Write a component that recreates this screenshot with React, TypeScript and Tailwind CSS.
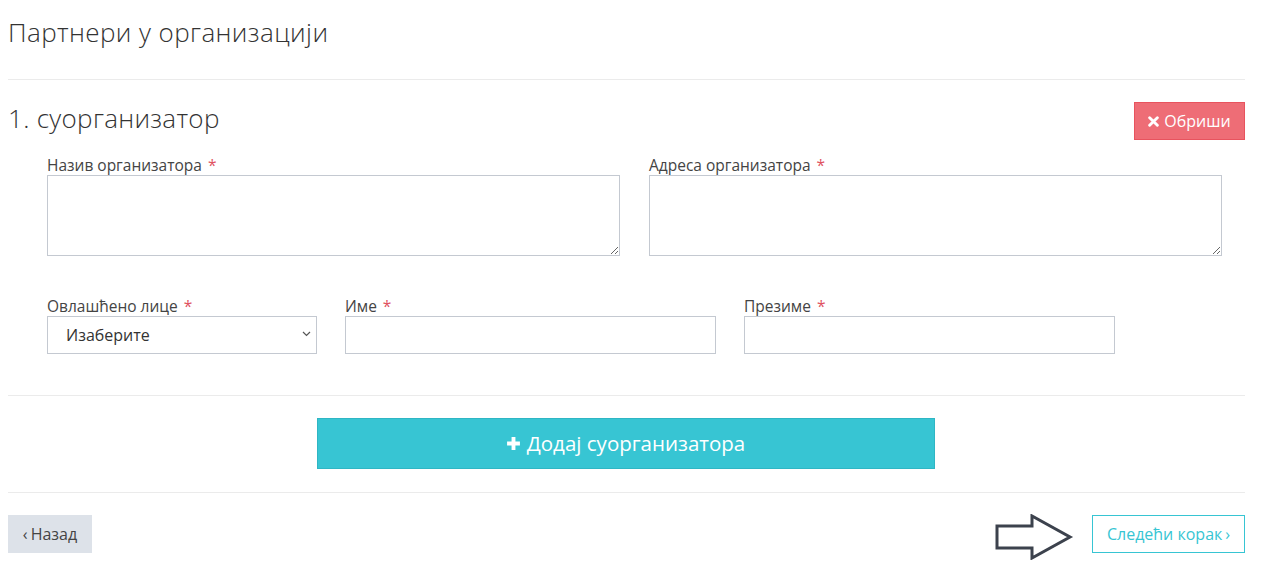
import React from 'react';

function Req() {
  return <span className="text-[#e0525f] ml-[6px]">*</span>;
}

export default function App() {
  const font = { fontFamily: '"Open Sans", "Liberation Sans", sans-serif' };
  return (
    <div className="bg-white w-[1275px] h-[571px] overflow-hidden text-[#3b3b3b]" style={font}>
      <div className="ml-[8px] w-[1237px]">
        <h1 className="pt-[13px] h-[79px] text-[26px] font-light text-[#333] tracking-[0.4px]">
          Партнери у организацији
        </h1>
        <div className="border-t border-[#ebebeb]" />

        <div className="flex items-start justify-between pt-[22px]">
          <h2 className="text-[26px] font-light text-[#333] leading-[32px] tracking-[0.3px]">1. суорганизатор</h2>
          <button className="flex items-center gap-[5px] h-[38px] w-[111px] justify-center bg-[#ee6d76] border border-[#e8535e] text-white text-[16px]">
            <svg width="11" height="11" viewBox="0 0 10 10">
              <path d="M1.5 1.5L8.5 8.5M8.5 1.5L1.5 8.5" stroke="white" strokeWidth="2.6" strokeLinecap="round" />
            </svg>
            Обриши
          </button>
        </div>

        <div className="ml-[39px] mt-[15px] flex gap-[29px]">
          <div className="w-[573px]">
            <label className="block text-[15.5px] leading-[20px] text-[#444]">
              Назив организатора<Req />
            </label>
            <textarea className="block w-full h-[81px] border border-[#c4c9d1] resize-y outline-none" />
          </div>
          <div className="w-[573px]">
            <label className="block text-[15.5px] leading-[20px] text-[#444]">
              Адреса организатора<Req />
            </label>
            <textarea className="block w-full h-[81px] border border-[#c4c9d1] resize-y outline-none" />
          </div>
        </div>

        <div className="ml-[39px] mt-[40px] flex gap-[28px]">
          <div className="w-[270px]">
            <label className="block text-[15.5px] leading-[20px] text-[#444]">
              Овлашћено лице<Req />
            </label>
            <div className="relative">
              <select className="block w-full h-[38px] border border-[#c4c9d1] bg-white pl-[18px] text-[16px] text-[#333] appearance-none outline-none">
                <option>Изаберите</option>
              </select>
              <svg className="absolute right-[6px] top-[15px]" width="9" height="6" viewBox="0 0 9 6">
                <path d="M1 1L4.5 4.5L8 1" stroke="#555" strokeWidth="1.2" fill="none" />
              </svg>
            </div>
          </div>
          <div className="w-[371px]">
            <label className="block text-[15.5px] leading-[20px] text-[#444]">
              Име<Req />
            </label>
            <input className="block w-full h-[38px] border border-[#c4c9d1] outline-none" />
          </div>
          <div className="w-[371px]">
            <label className="block text-[15.5px] leading-[20px] text-[#444]">
              Презиме<Req />
            </label>
            <input className="block w-full h-[38px] border border-[#c4c9d1] outline-none" />
          </div>
        </div>

        <div className="mt-[41px] border-t border-[#ebebeb]" />

        <div className="flex justify-center pt-[22px] pb-[23px]">
          <button className="-ml-[2px] w-[618px] h-[51px] bg-[#37c5d3] border border-[#2fb6c4] text-white text-[20.5px] flex items-center justify-center gap-[6px]">
            <svg width="15" height="15" viewBox="0 0 14 14">
              <path d="M7 1V13M1 7H13" stroke="white" strokeWidth="3.6" />
            </svg>
            Додај суорганизатора
          </button>
        </div>

        <div className="border-t border-[#ebebeb]" />

        <div className="flex items-start justify-between pt-[22px]">
          <button className="h-[38px] w-[84px] bg-[#dde2e9] text-[#444] text-[16px] flex items-center justify-center gap-[3px]">
            <span className="leading-none">‹</span>Назад
          </button>
          <div className="flex items-start gap-[18px]">
            <svg width="80" height="46" viewBox="0 0 80 46" className="-mt-[1px]">
              <polygon
                points="3,12 38,12 38,2 76,23 38,44 38,34 3,34"
                fill="none"
                stroke="#3c424d"
                strokeWidth="3"
                strokeLinejoin="miter"
              />
            </svg>
            <button className="h-[38px] w-[153px] border border-[#37c5d3] text-[#37c5d3] text-[16px] flex items-center justify-center gap-[3px]">
              Следећи корак<span className="leading-none">›</span>
            </button>
          </div>
        </div>
      </div>
    </div>
  );
}
